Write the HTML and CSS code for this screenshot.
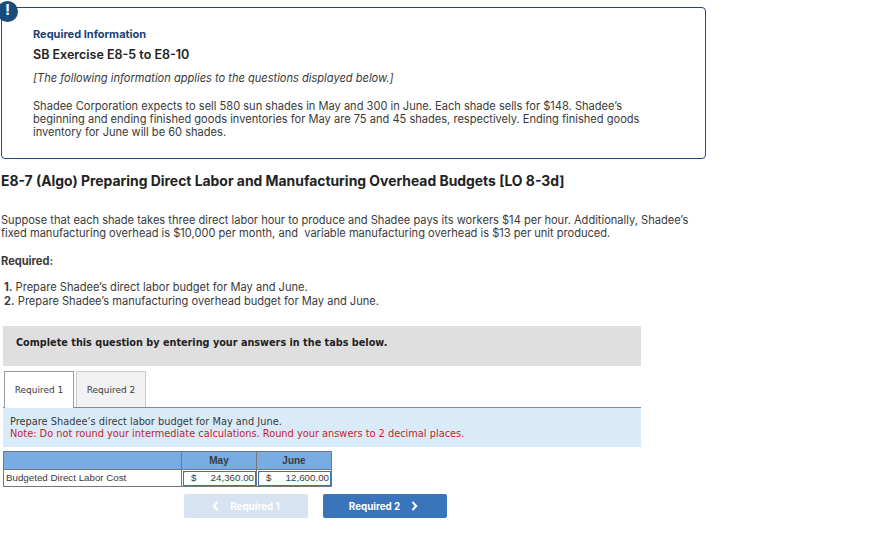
FILE: index.html
```html
<!DOCTYPE html>
<html lang="en">
<head>
    <meta charset="UTF-8">
    <meta name="viewport" content="width=device-width, initial-scale=1.0">
    <title>E8-7 Direct Labor and Manufacturing Overhead Budgets</title>
    <link rel="stylesheet" href="styles.css">
</head>
<body>

    <div class="info-box">
        <span class="alert-icon">!</span>
        <h4>Required Information</h4>
        <h3>SB Exercise E8-5 to E8-10</h3>
        <p class="applies">[The following information applies to the questions displayed below.]</p>
        <p>Shadee Corporation expects to sell 580 sun shades in May and 300 in June. Each shade sells for $148. Shadee’s<br>
        beginning and ending finished goods inventories for May are 75 and 45 shades, respectively. Ending finished goods<br>
        inventory for June will be 60 shades.</p>
    </div>

    <h2 class="question-title">E8-7 (Algo) Preparing Direct Labor and Manufacturing Overhead Budgets [LO 8-3d]</h2>

    <p class="intro">Suppose that each shade takes three direct labor hour to produce and Shadee pays its workers $14 per hour. Additionally, Shadee’s<br>
    fixed manufacturing overhead is $10,000 per month, and&nbsp; variable manufacturing overhead is $13 per unit produced.</p>

    <p class="required-label">Required:</p>

    <ol class="required-list">
        <li><b>1.</b> Prepare Shadee’s direct labor budget for May and June.</li>
        <li><b>2.</b> Prepare Shadee’s manufacturing overhead budget for May and June.</li>
    </ol>

    <div class="answer-area">
        <div class="complete-banner">Complete this question by entering your answers in the tabs below.</div>

        <div class="tabs">
            <div class="tab active">Required 1</div>
            <div class="tab">Required 2</div>
        </div>

        <div class="instructions">
            Prepare Shadee’s direct labor budget for May and June.<br>
            <span class="note">Note: Do not round your intermediate calculations. Round your answers to 2 decimal places.</span>
        </div>

        <table class="budget-table">
            <tr>
                <th class="label-col"></th>
                <th>May</th>
                <th>June</th>
            </tr>
            <tr>
                <td class="label-col">Budgeted Direct Labor Cost</td>
                <td class="answer"><span>$</span><span>24,360.00</span></td>
                <td class="answer"><span>$</span><span>12,600.00</span></td>
            </tr>
        </table>

        <div class="nav-buttons">
            <button class="nav-btn disabled" type="button">
                <svg width="7" height="10" viewBox="0 0 7 10"><path d="M5.5 1 1.8 5l3.7 4" fill="none" stroke="currentColor" stroke-width="2"/></svg>
                <span>Required 1</span>
            </button>
            <button class="nav-btn" type="button">
                <span>Required 2</span>
                <svg width="7" height="10" viewBox="0 0 7 10"><path d="M1.5 1l3.7 4-3.7 4" fill="none" stroke="currentColor" stroke-width="2"/></svg>
            </button>
        </div>
    </div>

</body>
</html>
```

FILE: styles.css
```css
body {
    font-family: Inter, "Liberation Sans", sans-serif;
    font-size: 11.08px;
    line-height: 13px;
    margin: 0;
    background-color: #fff;
    color: #3a3a3a;
}
p {
    margin: 0;
}
.info-box {
    position: relative;
    width: 705px;
    height: 152px;
    box-sizing: border-box;
    margin: 7px 0 0 1px;
    padding: 20px 31px 0;
    border: 1px solid #1b4a7d;
    border-radius: 4px;
}
.alert-icon {
    position: absolute;
    left: -5px;
    top: -7px;
    width: 21px;
    height: 21px;
    border-radius: 50%;
    background-color: #1b4a7d;
    color: #fff;
    font-weight: bold;
    font-size: 15px;
    line-height: 17px;
    text-align: center;
}
.info-box h4 {
    margin: 0;
    font-size: 11px;
    color: #1b3f73;
}
.info-box h3 {
    margin: 6px 0 0;
    font-size: 12.5px;
    line-height: 16px;
    font-weight: 600;
    color: #222;
}
.applies {
    margin-top: 9px;
    font-style: italic;
}
.applies + p {
    margin-top: 15px;
}
.question-title {
    margin: 13px 0 0 1px;
    font-size: 13.9px;
    line-height: 18px;
    color: #222;
}
.intro {
    margin: 24px 0 0 1px;
}
.required-label {
    margin: 15px 0 0 1px;
    font-weight: bold;
}
.required-list {
    list-style: none;
    margin: 12px 0 0 4px;
    padding: 0;
}
.required-list li {
    line-height: 14px;
}
.answer-area {
    width: 638px;
    margin: 18px 0 0 3px;
}
.complete-banner {
    height: 40px;
    box-sizing: border-box;
    padding: 10px 13px;
    background-color: #dfdfdf;
    font-family: "DejaVu Sans", sans-serif;
    font-size: 9.7px;
    font-weight: bold;
    color: #222;
}
.tabs {
    display: flex;
    gap: 2px;
    margin-top: 5px;
    padding-left: 1px;
    border-bottom: 1px solid #8a8a8a;
}
.tab {
    width: 68px;
    height: 35px;
    line-height: 37px;
    text-align: center;
    border: 1px solid #ccc;
    border-bottom: 0;
    background-color: #f2f2f2;
    font-family: "DejaVu Sans", sans-serif;
    font-size: 9px;
}
.tab.active {
    width: 68px;
    height: 36px;
    margin-bottom: -1px;
    background-color: #fff;
    border-color: #999;
}
.instructions {
    height: 39px;
    box-sizing: border-box;
    padding: 8px 7px;
    background-color: #d9ebf9;
    font-family: "DejaVu Sans", sans-serif;
    font-size: 9.8px;
    line-height: 12px;
}
.note {
    color: #c41e2a;
}
.budget-table {
    border-collapse: collapse;
    table-layout: fixed;
    width: 328px;
    margin-top: 4px;
    font-family: "Liberation Sans", sans-serif;
    font-size: 9.75px;
}
.budget-table th, .budget-table td {
    border: 1px solid #777;
    padding: 0 2px;
    height: 16px;
}
.budget-table th {
    width: 70px;
    background-color: #78ace3;
    font-size: 10px;
    height: 17px;
}
.budget-table .label-col {
    width: 173px;
}
.budget-table td {
    padding-bottom: 1px;
    height: 15px;
}
.answer {
    position: relative;
    outline: 1px solid #3a75bc;
    outline-offset: -2px;
}
.answer::before {
    content: "";
    position: absolute;
    left: 1px;
    top: 1px;
    border-top: 3px solid #3a75bc;
    border-right: 3px solid transparent;
}
.answer span:first-child {
    float: left;
    margin-left: 7px;
}
.answer span:last-child {
    float: right;
}
.nav-buttons {
    display: flex;
    gap: 15px;
    margin: 7px 0 0 181px;
}
.nav-btn {
    display: flex;
    align-items: center;
    justify-content: center;
    width: 124px;
    height: 24px;
    border: 0;
    border-radius: 2px;
    background-color: #3a75bc;
    color: #fff;
    font-family: Inter, "Liberation Sans", sans-serif;
    font-size: 9.8px;
    font-weight: 700;
}
.nav-btn span + svg {
    margin: 0 3px 0 11px;
}
.nav-btn svg:first-child {
    margin-right: 11px;
}
.nav-btn.disabled {
    background-color: #d7e3f1;
}
```
